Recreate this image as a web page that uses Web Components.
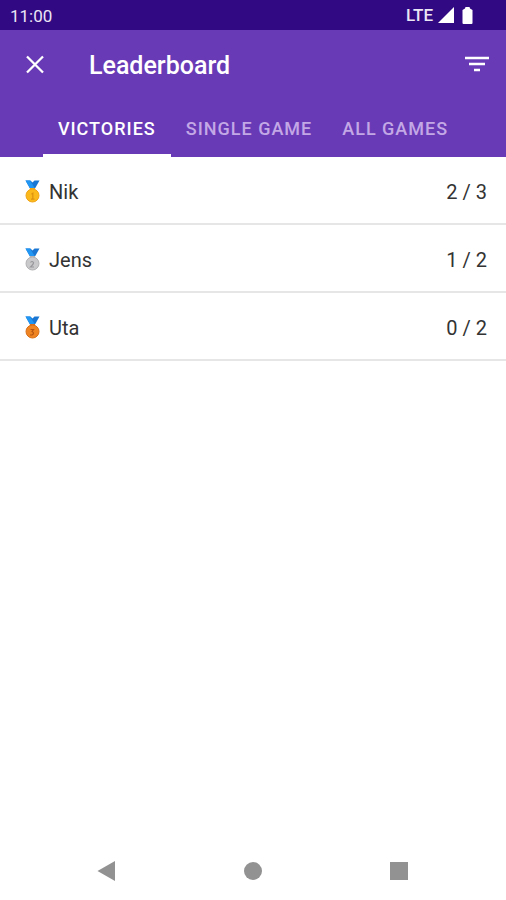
<!DOCTYPE html>
<html lang="en">
<head>
<meta charset="utf-8">
<meta name="viewport" content="width=device-width, initial-scale=1">
<title>Leaderboard</title>
<style>
  body {
    margin: 0;
    background: #fff;
    font-family: Roboto, "Liberation Sans", sans-serif;
  }
</style>
</head>
<body>
<leaderboard-app>
  <status-bar slot="status" time="11:00" network="LTE"></status-bar>
  <app-bar slot="header">Leaderboard</app-bar>
  <tab-strip slot="header">
    <tab-item active>VICTORIES</tab-item>
    <tab-item>SINGLE GAME</tab-item>
    <tab-item>ALL GAMES</tab-item>
  </tab-strip>
  <score-row medal="gold" score="2 / 3">Nik</score-row>
  <score-row medal="silver" score="1 / 2">Jens</score-row>
  <score-row medal="bronze" score="0 / 2">Uta</score-row>
  <nav-bar slot="footer"></nav-bar>
</leaderboard-app>

<script>
// Page frame: status bar, purple header, list, system navigation
class LeaderboardApp extends HTMLElement {
  constructor() {
    super();
    this.attachShadow({ mode: 'open' }).innerHTML = `
      <style>
        :host {
          display: flex;
          flex-direction: column;
          min-height: 100vh;
        }
        header {
          background: #693ab6;
        }
        main {
          flex: 1;
        }
      </style>
      <slot name="status"></slot>
      <header><slot name="header"></slot></header>
      <main><slot></slot></main>
      <slot name="footer"></slot>
    `;
  }
}
customElements.define('leaderboard-app', LeaderboardApp);

// Clock on the left, signal and battery on the right
class StatusBar extends HTMLElement {
  constructor() {
    super();
    this.attachShadow({ mode: 'open' }).innerHTML = `
      <style>
        :host {
          display: flex;
          align-items: center;
          justify-content: space-between;
          height: 30px;
          padding: 0 33px 0 10px;
          background: #310a83;
          color: #ebe6f5;
          font-size: 17px;
          font-weight: 500;
          line-height: 20px;
        }
        .time {
          font-weight: 400;
          padding-top: 2px;
        }
        .icons {
          display: flex;
          align-items: center;
          gap: 5px;
        }
        svg {
          display: block;
          fill: #fff;
        }
        .battery {
          margin-left: 3px;
        }
      </style>
      <span class="time">${this.getAttribute('time')}</span>
      <div class="icons">
        <span>${this.getAttribute('network')}</span>
        <svg width="16" height="16" viewBox="0 0 16 16"><path d="M16 0v16H0z"/></svg>
        <svg class="battery" width="11" height="17" viewBox="0 0 11 17"><path d="M3.500 0h4l.5 1.500 2.500 1.500v13a1 1 0 0 1-1 1h-8a1 1 0 0 1-1-1V3L3 1.500z"/></svg>
      </div>
    `;
  }
}
customElements.define('status-bar', StatusBar);

// Title with close and filter buttons
class AppBar extends HTMLElement {
  constructor() {
    super();
    this.attachShadow({ mode: 'open' }).innerHTML = `
      <style>
        :host {
          display: flex;
          align-items: center;
          height: 70px;
          padding: 0 12px 0 18px;
          color: #fff;
        }
        h1 {
          flex: 1;
          margin: 0;
          padding: 2px 0 0 37px;
          font-size: 25px;
          font-weight: 500;
          line-height: 32px;
        }
        button {
          display: block;
          padding: 0;
          border: 0;
          background: none;
          color: inherit;
          cursor: pointer;
        }
        svg {
          display: block;
        }
      </style>
      <button type="button" aria-label="Close">
        <svg width="34" height="34" viewBox="0 0 34 34" fill="none" stroke="currentColor" stroke-width="2.300"><path d="M9 8.500l16 16M25 8.500l-16 16"/></svg>
      </button>
      <h1><slot></slot></h1>
      <button type="button" aria-label="Filter">
        <svg width="34" height="34" viewBox="0 0 34 34" fill="currentColor"><path d="M5 8.700h24v2.600H5zM9 14.700h16v2.600H9zM14 20.700h6v2.600h-6z"/></svg>
      </button>
    `;
  }
}
customElements.define('app-bar', AppBar);

class TabStrip extends HTMLElement {
  constructor() {
    super();
    this.attachShadow({ mode: 'open' }).innerHTML = `
      <style>
        :host {
          display: flex;
          justify-content: center;
          height: 57px;
        }
      </style>
      <slot></slot>
    `;
  }
}
customElements.define('tab-strip', TabStrip);

class TabItem extends HTMLElement {
  constructor() {
    super();
    this.attachShadow({ mode: 'open' }).innerHTML = `
      <style>
        :host {
          display: flex;
        }
        button {
          padding: 4px 15px 0;
          border: 0;
          border-bottom: 3px solid transparent;
          background: none;
          color: #c3a8e6;
          font: 500 18px/20px Roboto, "Liberation Sans", sans-serif;
          letter-spacing: 1px;
          white-space: nowrap;
          cursor: pointer;
        }
        :host([active]) button {
          color: #fff;
          border-bottom-color: #fff;
        }
      </style>
      <button type="button" aria-pressed="${this.hasAttribute('active')}"><slot></slot></button>
    `;
  }
}
customElements.define('tab-item', TabItem);

// Ribbon and disc colours of each medal
const MEDALS = {
  gold: { disc: '#fbb91c', rim: '#f0a416', mark: '#dc9210' },
  silver: { disc: '#c9c9cb', rim: '#b2b2b5', mark: '#98989c' },
  bronze: { disc: '#ee8422', rim: '#d96f18', mark: '#b45412' }
};
const MARKS = {
  gold: 'M7.500 14.200l1.300-1v6M7 19.200h3.500',
  silver: 'M6.500 14.500q1.500-2 3 0q.2 1.500-3 4.500h3.500',
  bronze: 'M6.500 13.500h3l-1.500 2q3 1.500 0 3.500h-2'
};

class ScoreRow extends HTMLElement {
  constructor() {
    super();
    const medal = this.getAttribute('medal');
    const c = MEDALS[medal];
    this.attachShadow({ mode: 'open' }).innerHTML = `
      <style>
        :host {
          box-sizing: border-box;
          display: flex;
          align-items: center;
          height: 68px;
          padding: 3px 19px 0 24px;
          border-bottom: 2px solid #e6e6e6;
          color: #333;
          font-size: 20px;
          line-height: 24px;
        }
        svg {
          display: block;
          margin-right: 8px;
        }
        .name {
          flex: 1;
        }
      </style>
      <svg width="17" height="23" viewBox="0 0 17 23" role="img" aria-label="${medal} medal">
        <path d="M1.500 .5h5l2 2 2-2h5L11 8.500H6z" fill="#1976d2"/>
        <path d="M1.500 .5h4.500l5 8H6z" fill="#2196f3"/>
        <path d="M6 8h5v2H6z" fill="${c.rim}"/>
        <circle cx="8.500" cy="15.500" r="6.500" fill="${c.disc}" stroke="${c.rim}"/>
        <path d="${MARKS[medal]}" fill="none" stroke="${c.mark}" stroke-width="1.200"/>
      </svg>
      <span class="name"><slot></slot></span>
      <span>${this.getAttribute('score')}</span>
    `;
  }
}
customElements.define('score-row', ScoreRow);

// System back, home and recents buttons
class NavBar extends HTMLElement {
  constructor() {
    super();
    this.attachShadow({ mode: 'open' }).innerHTML = `
      <style>
        :host {
          display: flex;
          align-items: center;
          justify-content: space-around;
          height: 58px;
          padding: 0 34px;
        }
        button {
          padding: 0;
          border: 0;
          background: none;
          cursor: pointer;
        }
        svg {
          display: block;
          fill: #929292;
        }
      </style>
      <button type="button" aria-label="Back">
        <svg width="20" height="22" viewBox="0 0 20 22"><path d="M18 1v20L.5 11z"/></svg>
      </button>
      <button type="button" aria-label="Home">
        <svg width="20" height="20" viewBox="0 0 20 20"><circle cx="10" cy="10" r="9"/></svg>
      </button>
      <button type="button" aria-label="Recent apps">
        <svg width="20" height="20" viewBox="0 0 20 20"><path d="M1 1h18v18H1z"/></svg>
      </button>
    `;
  }
}
customElements.define('nav-bar', NavBar);
</script>
</body>
</html>
